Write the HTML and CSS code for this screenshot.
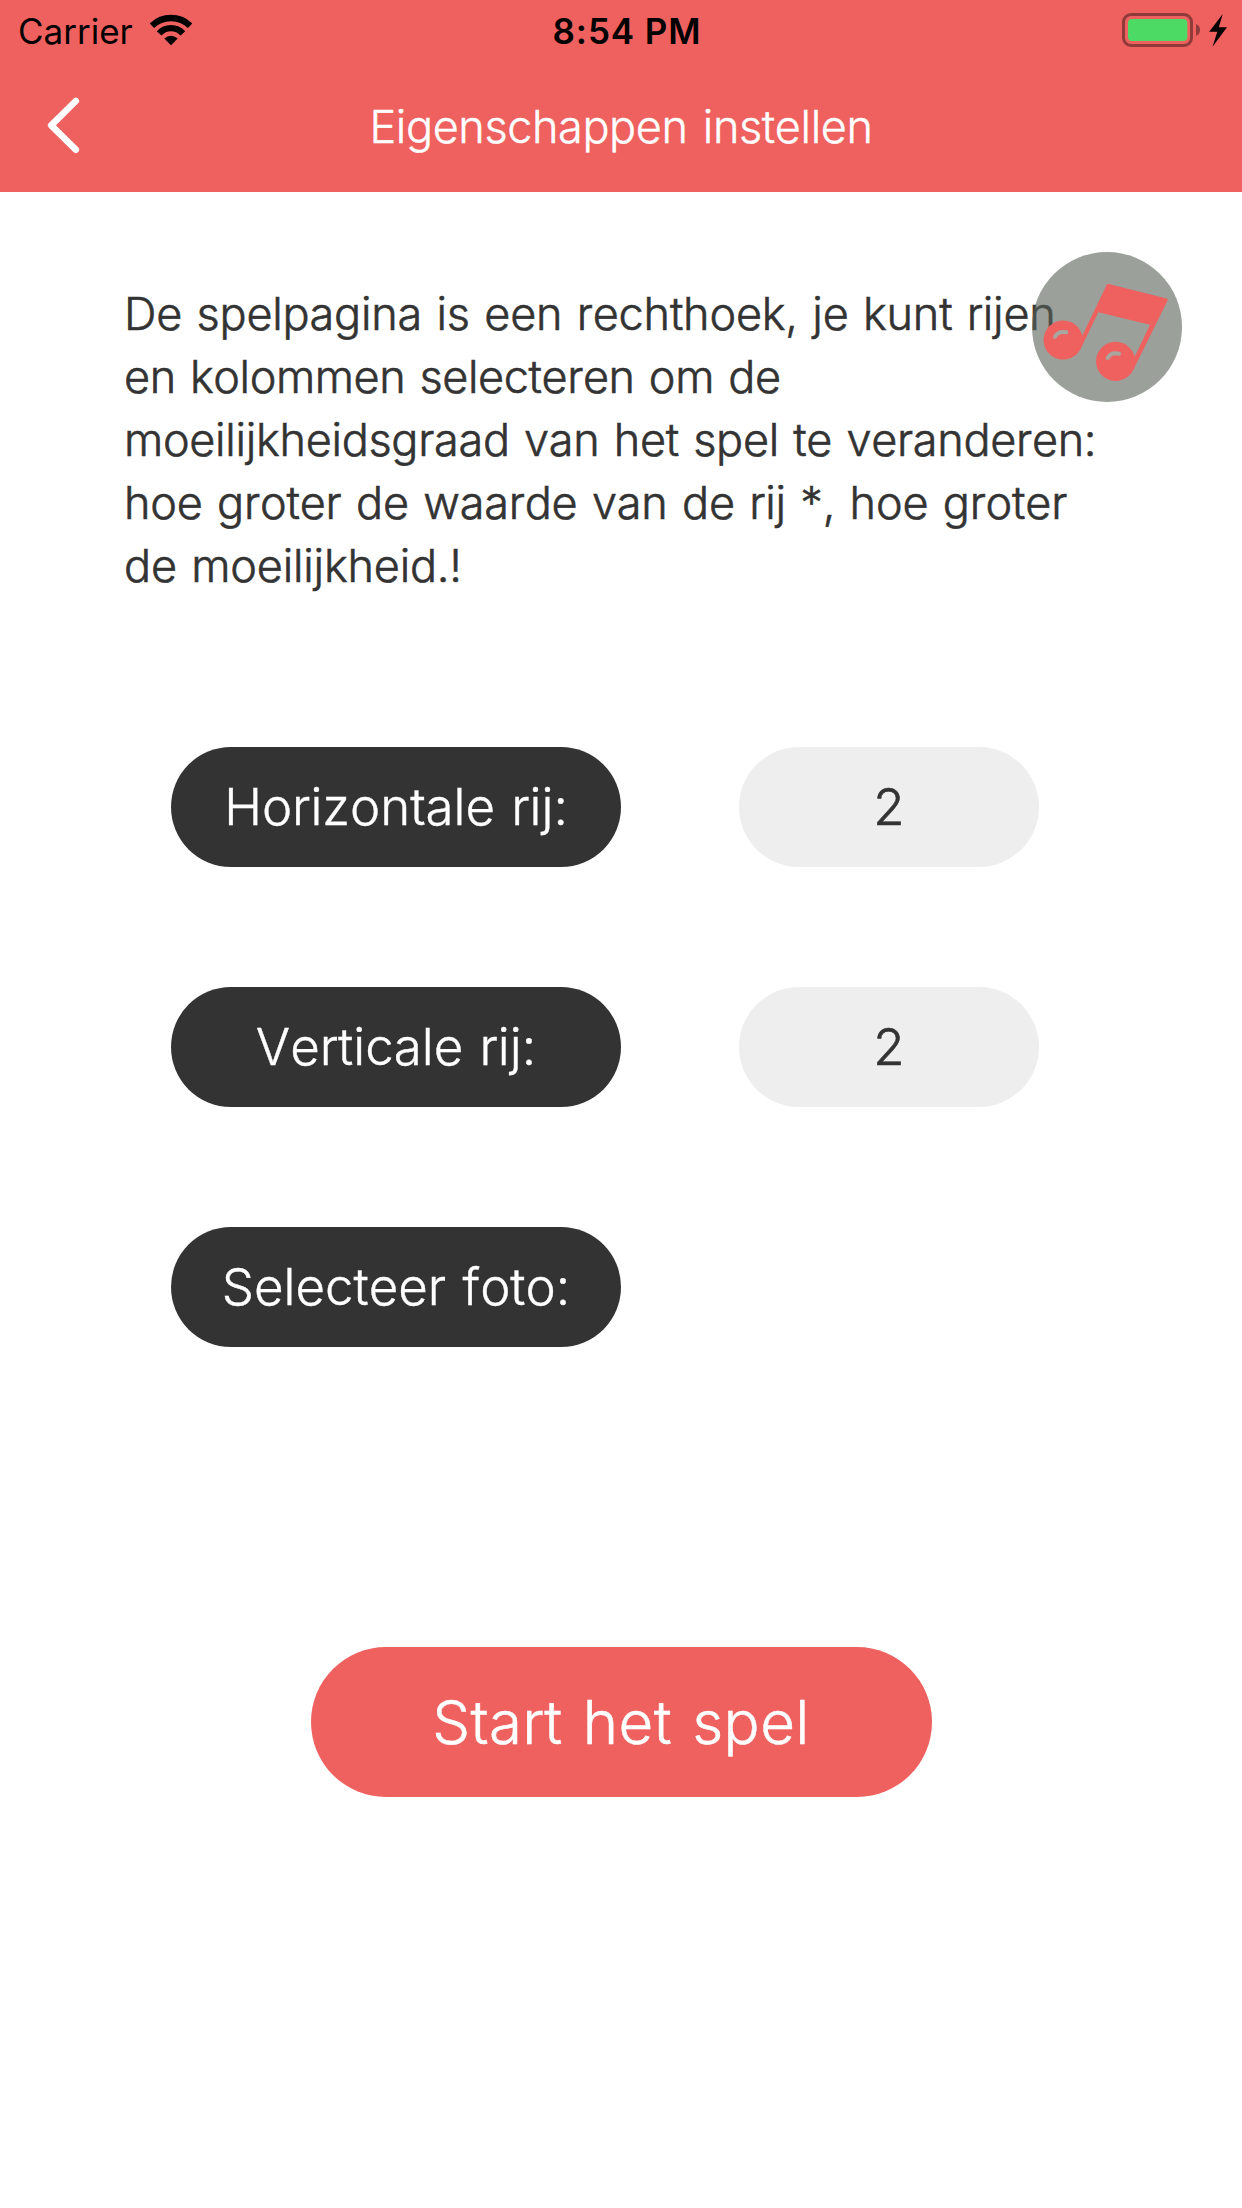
FILE: index.html
```
<!DOCTYPE html>
<html lang="nl">
<head>
<meta charset="utf-8">
<title>Eigenschappen instellen</title>
<link rel="stylesheet" href="styles.css">
</head>
<body>
<header class="header">
  <div class="status">
    <div class="status-left">
      <span class="carrier">Carrier</span>
      <svg class="wifi" viewBox="0 0 42 32" width="42" height="32">
        <path class="wifi-arc" d="M1.9 11.7A27.5 27.5 0 0 1 40.1 11.7M9.1 19.4A16 16 0 0 1 32.9 19.4"/>
        <path d="M14.3 24.4Q21 19 27.7 24.4L21 31.2z"/>
      </svg>
    </div>
    <span class="time">8:54 PM</span>
    <div class="status-right">
      <svg viewBox="0 0 108 36" width="108" height="36">
        <rect class="battery-shell" x="1.5" y="2.5" width="68" height="31" rx="7.5"/>
        <rect class="battery-level" x="6" y="7" width="59.3" height="22" rx="4"/>
        <path class="battery-cap" d="M74 12Q78 13.5 78 18T74 24z"/>
        <path d="M100.7 2L87.2 19.8H95.3L90.5 34.7L105 15.3H96.8z"/>
      </svg>
    </div>
  </div>
  <nav class="navbar">
    <svg class="back" viewBox="0 0 34 58" width="34" height="58">
      <path d="M29.8 5L5.2 29.3L29.8 53.7"/>
    </svg>
    <h1 class="title">Eigenschappen instellen</h1>
  </nav>
</header>
<main class="content">
  <p class="intro">
    <span class="line wide">De spelpagina is een rechthoek, je kunt rijen</span>
    <span class="line tight">en kolommen selecteren om de</span>
    <span class="line">moeilijkheidsgraad van het spel te veranderen:</span>
    <span class="line wide">hoe groter de waarde van de rij *, hoe groter</span>
    <span class="line wide">de moeilijkheid.!</span>
  </p>
  <div class="settings">
    <div class="row"><div class="label">Horizontale rij:</div><div class="value">2</div></div>
    <div class="row"><div class="label">Verticale rij:</div><div class="value">2</div></div>
    <div class="row"><div class="label">Selecteer foto:</div></div>
  </div>
  <button class="start">Start het spel</button>
</main>
<div class="music">
  <svg viewBox="0 0 150 150" width="150" height="150">
    <path class="note" d="M50.3 83.7L74.6 33Q75.3 31.8 76.6 32.1L134.6 46.4Q136.3 47 135.6 48.6L101 118.5A19.6 19.6 0 1 1 102.7 104.7L118 72.7L66.3 60.3L48.7 96.8A19.6 19.6 0 1 1 50.3 83.7z"/>
    <path class="shine" d="M23 84.7Q26.5 78.5 34.3 80.3M75.7 106Q79.2 99.8 87 101.8"/>
  </svg>
</div>
</body>
</html>
```
FILE: styles.css
```
* { box-sizing: border-box; }
body {
  position: relative;
  margin: 0;
  min-height: 2208px;
  background: #fff;
  color: #333;
  font-family: Inter, "Liberation Sans", sans-serif;
  font-weight: 300;
  font-kerning: none;
}
svg { display: block; }
.header { height: 192px; background: #ef615f; }
.status {
  display: grid;
  grid-template-columns: 1fr auto 1fr;
  height: 60px;
  padding: 0 12px 0 18px;
  color: #000;
  font-size: 35px;
  line-height: 62px;
  font-kerning: normal;
}
.status-left { display: flex; gap: 17px; font-weight: 400; }
.wifi { margin-top: 14px; }
.wifi-arc { fill: none; stroke: #000; stroke-width: 6.3; }
.time { margin-left: 6px; font-weight: 600; letter-spacing: 0.9px; }
.status-right { display: flex; justify-content: flex-end; padding-top: 12px; }
.battery-shell { fill: none; stroke: #903b3a; stroke-width: 3; }
.battery-level { fill: #4cd964; }
.battery-cap { fill: #903b3a; }
.navbar {
  display: grid;
  grid-template-columns: 120px 1fr 120px;
  height: 132px;
  padding-top: 36px;
}
.back { margin-left: 46px; fill: none; stroke: #fff; stroke-width: 6.6; stroke-linecap: round; stroke-linejoin: round; }
.title {
  margin: 0;
  color: #fff;
  font-size: 45px;
  font-weight: 300;
  line-height: 62px;
  letter-spacing: -0.4px;
  word-spacing: 3px;
  text-align: center;
  white-space: nowrap;
  -webkit-text-stroke: 0.4px;
}
.content { display: flex; flex-direction: column; align-items: center; }
.intro {
  width: 996px;
  height: 315px;
  margin: 90px 0 0;
  padding-left: 1px;
  font-size: 45px;
  line-height: 63px;
  white-space: nowrap;
  word-spacing: 2px;
  -webkit-text-stroke: 0.6px;
}
.line { display: block; letter-spacing: -0.3px; }
.line.wide { letter-spacing: -0.2px; }
.line.tight { letter-spacing: -0.42px; }
.settings { display: grid; gap: 120px; width: 900px; margin-top: 150px; }
.row {
  display: flex;
  gap: 118px;
  font-size: 51px;
  line-height: 120px;
  word-spacing: 2px;
  text-align: center;
  white-space: nowrap;
}
.label { width: 450px; height: 120px; border-radius: 60px; background: #333; color: #fff; -webkit-text-stroke: 0.4px; }
.value { width: 300px; height: 120px; border-radius: 60px; background: #eee; -webkit-text-stroke: 0.6px; }
.start {
  width: 621px;
  height: 150px;
  margin-top: 300px;
  padding: 0;
  border: 0;
  border-radius: 75px;
  background: #ef615f;
  color: #fff;
  font: inherit;
  font-size: 60px;
  font-kerning: none;
  line-height: 150px;
  letter-spacing: 0.4px;
  word-spacing: 3px;
  -webkit-text-stroke: 0.5px;
}
.music { position: absolute; left: 1032px; top: 252px; border-radius: 50%; background: rgba(88, 97, 86, 0.6); }
.note { fill: #ef615f; }
.shine { fill: none; stroke: #a9a69f; stroke-width: 4; stroke-linecap: round; }
```
